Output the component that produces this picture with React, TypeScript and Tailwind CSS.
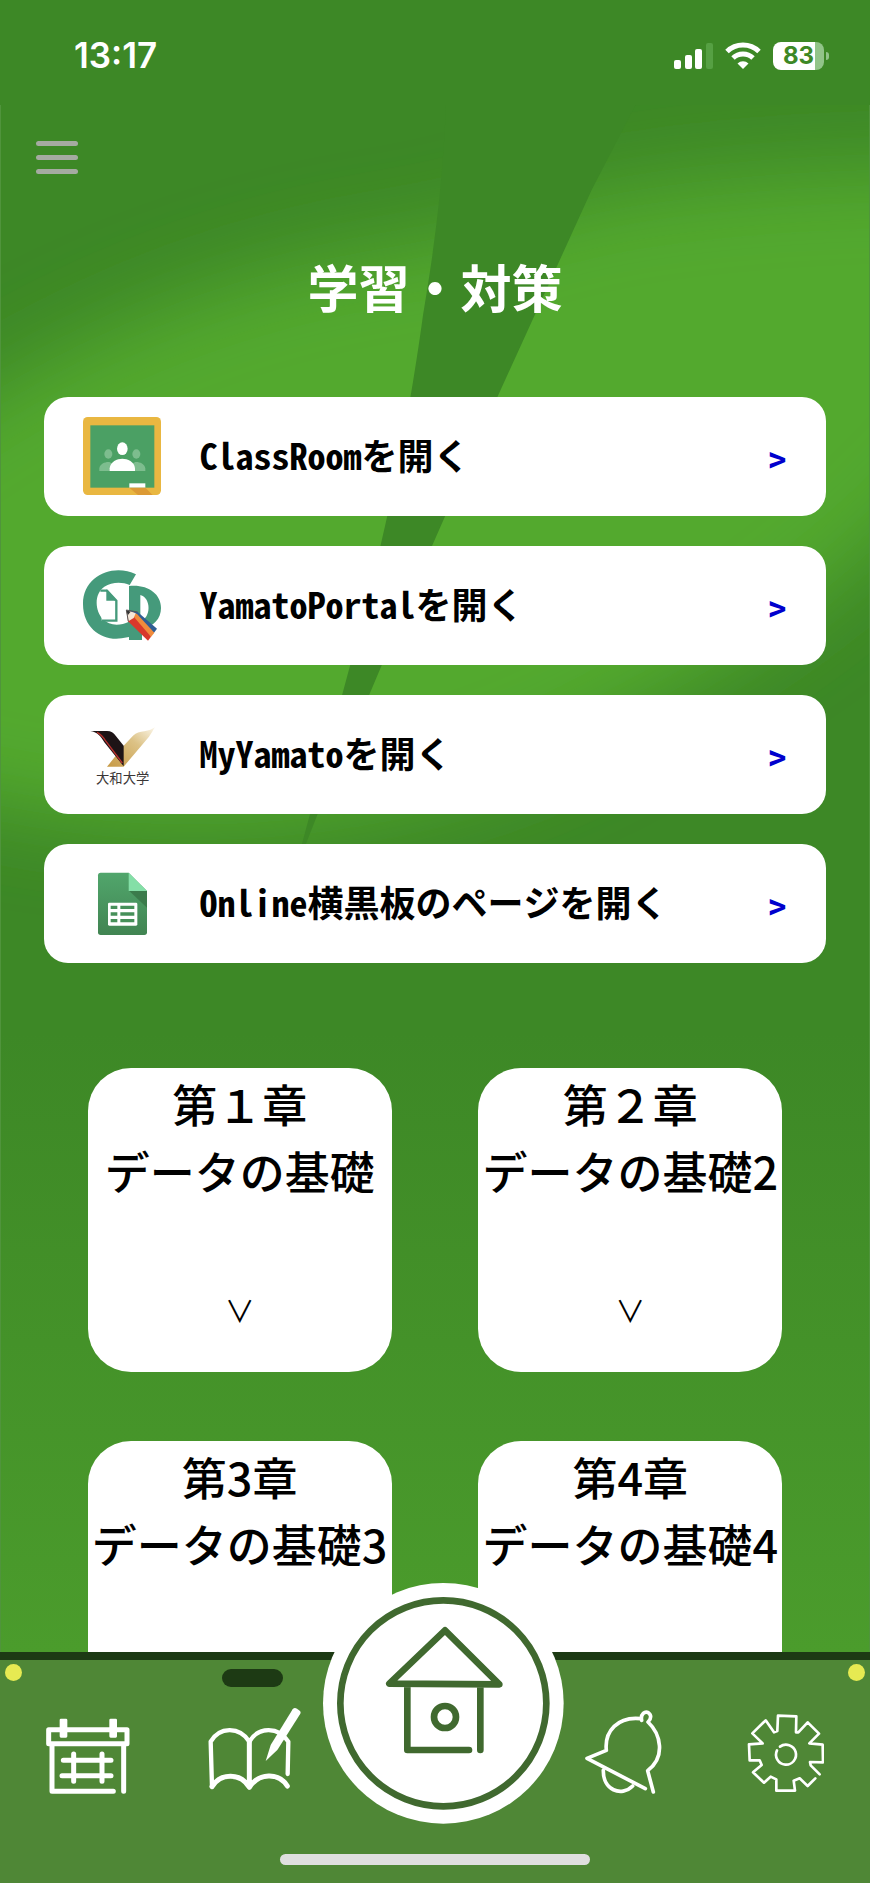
import React from 'react';

interface LinkItem {
  label: string;
  icon: React.ReactNode;
}

interface Chapter {
  number: string;
  title: string;
  expandable?: boolean;
}

const ClassroomIcon = () => (
  <svg viewBox="0 0 234 234" className="size-[78px]" aria-hidden="true">
    <rect width="234" height="234" rx="14" fill="#e9b741" />
    <rect x="22" y="25" width="192" height="187" fill="#4ba064" />
    <g fill="#7dbd8e">
      <ellipse cx="76" cy="111" rx="12" ry="14" />
      <ellipse cx="160" cy="111" rx="12" ry="14" />
      <path d="M49 162v-8c2-14 18-20 30-19l18 10-16 17zM187 162v-8c-2-14-18-20-30-19l-18 10 16 17z" />
    </g>
    <g fill="#fff">
      <ellipse cx="118" cy="95" rx="16" ry="19" />
      <path d="M80 162v-8c2-20 22-29 38-29s36 9 38 29v8z" />
      <rect x="139" y="199" width="48" height="13" />
    </g>
    <path d="M139 212h48l22 22h-44z" fill="#dc9a35" />
  </svg>
);

const PortalIcon = () => (
  <svg viewBox="0 0 234 234" className="size-[78px]" aria-hidden="true">
    <path
      d="M159 25C95-8 0 25 0 114c0 76 62 112 116 103l22-4v-46c-28 14-60 12-78-7-26-28-26-78 4-98 22-14 52-16 76-5z"
      fill="#459a7b"
    />
    <path
      fillRule="evenodd"
      d="M138 60c54-6 96 22 96 66 0 32-22 56-57 62v34h-39zM172 87v78c33-8 33-70 0-78z"
      fill="#459a7b"
    />
    <path d="M52 74h20l28 30v60H56" fill="#fff" stroke="#459a7b" strokeWidth="7" />
    <path d="M70 70l32 34H70z" fill="#459a7b" />
    <path d="M130 132l34 6 58 50-10 14-56-34z" fill="#2f5d94" />
    <path d="M130 132l32 12 52 56-10 13-60-54z" fill="#f08b3c" />
    <path d="M130 132l12 8 62 72-9 12-60-58z" fill="#d8392b" />
    <path d="M130 132l28 10-6 14-16 10z" fill="#f5e6d8" />
    <path d="M130 132l13 5-9 11z" fill="#333" />
    <path d="M130 132l34 6M130 132l6 34" stroke="#555" strokeWidth="3" />
  </svg>
);

const YamatoIcon = () => (
  <svg viewBox="0 0 234 234" className="size-[78px]" aria-hidden="true">
    <defs>
      <linearGradient id="gold" x1="0" y1="1" x2="1" y2="0">
        <stop offset="0" stopColor="#c79a45" />
        <stop offset="0.6" stopColor="#dcc286" />
        <stop offset="1" stopColor="#fbf6e8" />
      </linearGradient>
    </defs>
    <path d="M122 92l28-30c10-9 20-12 34-13 14-2 24-6 32-12-6 8-10 18-18 28l-76 90H72l18-22z" fill="url(#gold)" />
    <path d="M22 48h50c12 0 20 6 26 14l24 30v62L64 82C54 64 44 52 22 48z" fill="#1d1416" />
    <path d="M42 52c12 6 20 16 26 26l50 66" fill="none" stroke="#b8322e" strokeWidth="4" />
    <text x="119" y="204" textAnchor="middle" fontSize="40" fill="#3a3636" className="font-['Noto_Sans_CJK_JP',sans-serif] font-normal">
      大和大学
    </text>
  </svg>
);

const SheetsIcon = () => (
  <svg viewBox="0 0 234 234" className="size-[78px]" aria-hidden="true">
    <defs>
      <linearGradient id="sheet" x1="0" y1="0" x2="0" y2="1">
        <stop offset="0" stopColor="#51a66c" />
        <stop offset="1" stopColor="#418452" />
      </linearGradient>
    </defs>
    <path d="M53 26h84l55 55v124q0 8-8 8H53q-8 0-8-8V34q0-8 8-8z" fill="url(#sheet)" />
    <path d="M139 81h53v50z" fill="#3b7b4b" />
    <path d="M137 26l55 55h-55z" fill="#84dfa7" />
    <rect x="75" y="116" width="88" height="69" rx="4" fill="#fff" />
    <path d="M83 125h20v10H83zM112 125h42v10h-42zM83 145h20v10H83zM112 145h42v10h-42zM83 165h20v10H83zM112 165h42v10h-42z" fill="#469059" />
  </svg>
);

const CalendarIcon = () => (
  <svg viewBox="0 0 252 270" className="h-[90px] w-[84px]" fill="none" stroke="#fff" strokeWidth="15" strokeLinecap="round" strokeLinejoin="round">
    <path d="M8 71h235v42H8zM18 113v143h184M233 113v143" />
    <path d="M52 163h143M48 209h147M83 144v82M168 144v82" />
    <path d="M41 42q0-4 4-4h15q4 0 4 4v49q0 4-4 4H45q-4 0-4-4zM190 42q0-4 4-4h15q4 0 4 4v49q0 4-4 4h-15q-4 0-4-4z" fill="#fff" stroke="none" />
  </svg>
);

const BookIcon = () => (
  <svg viewBox="0 0 279 270" className="h-[90px] w-[93px]" fill="none" stroke="#fff" strokeWidth="15" strokeLinecap="round" strokeLinejoin="round">
    <path d="M12 242L8 107C34 62 94 60 124 107 152 60 212 62 241 107l-2 97" strokeWidth="13" />
    <path d="M124 107v136M12 242c26-42 86-42 112 2 28-44 88-46 114-4" strokeWidth="15" />
    <path d="M173 165l15-48L254 10q5-7 13-2l8 6q5 4 1 11l-68 107z" fill="#fff" stroke="none" />
  </svg>
);

const BellIcon = () => (
  <svg viewBox="0 0 231 270" className="h-[90px] w-[77px]" fill="none" stroke="#fff" strokeWidth="11" strokeLinecap="round" strokeLinejoin="round">
    <path d="M181 248L6 157l58-24C58 76 98 30 168 38l2 5c-4-20 10-28 20-23 9 6 10 18-1 28 38 36 54 104-1 146l17 64" />
    <path d="M55 192c-2 60 54 82 88 48" />
  </svg>
);

const GearIcon = () => (
  <svg viewBox="0 0 231 270" className="h-[90px] w-[77px]" fill="none" stroke="#fff" strokeWidth="8" strokeLinecap="round" strokeLinejoin="round">
    <path d="M205 217L182 240 158 217 140 224 144 254H88V220L71 212 51 230 18 199 44 177 38 163H8L6 115 47 112 16 82 56 43 81 79 91 75 93 29 148 31 147 79H154L182 49 216 83 187 112 227 116 228 169 189 168 191 178 218 205" />
    <path d="M99 122a30 30 0 1 1-9 11" />
  </svg>
);

const HomeIcon = () => (
  <svg viewBox="0 0 723 723" className="size-[241px]" fill="none" stroke="#40692f" strokeWidth="20" strokeLinecap="round" strokeLinejoin="round">
    <circle cx="361" cy="361" r="361" fill="#fff" stroke="none" />
    <circle cx="361" cy="361" r="309" />
    <path d="M366 142L199 302l330 2zM253 306v195h185M472 306v195" />
    <circle cx="366" cy="402" r="33" />
  </svg>
);

const StatusIcons = () => (
  <div className="flex items-center gap-3">
    <svg viewBox="0 0 39 27" className="h-[27px] w-[39px]" fill="#fff" aria-hidden="true">
      <rect x="0" y="18" width="7" height="9" rx="2" />
      <rect x="11" y="13" width="7" height="14" rx="2" />
      <rect x="21" y="7" width="7" height="20" rx="2" />
      <rect x="32" y="1" width="7" height="26" rx="2" fill="#56a043" />
    </svg>
    <svg viewBox="0 0 36 27" className="h-[27px] w-[36px]" fill="none" stroke="#fff" strokeWidth="5" aria-hidden="true">
      <path d="M2 9.500a23 23 0 0 1 32 0" />
      <path d="M8 16a14.500 14.500 0 0 1 20 0" />
      <path d="M18 27l-5.500-5.500a8 8 0 0 1 11 0z" fill="#fff" stroke="none" />
    </svg>
    <div className="flex items-center gap-[2px]">
      <div className="flex h-7 w-[51px] items-center justify-center rounded-lg bg-linear-to-r from-white from-83% to-[#92c489] to-83%">
        <span className="font-[Inter,sans-serif] text-2xl font-bold text-[#3d8826]">83</span>
      </div>
      <div className="h-2 w-[3px] rounded-r-full bg-[#92c489]" />
    </div>
  </div>
);

const LeafBackground = () => (
  <svg viewBox="0 105 870 1547" preserveAspectRatio="none" className="absolute inset-0 h-full w-full" aria-hidden="true">
    <defs>
      <linearGradient id="base" x1="0" y1="105" x2="0" y2="1652" gradientUnits="userSpaceOnUse">
        <stop offset="0.6" stopColor="#3d8826" />
        <stop offset="1" stopColor="#4b9c2c" />
      </linearGradient>
      <filter id="soft" x="-20%" y="-20%" width="140%" height="140%">
        <feGaussianBlur stdDeviation="42" />
      </filter>
    </defs>
    <rect y="105" width="870" height="1547" fill="url(#base)" />
    <path
      d="M-160 500C20 350 220 265 440 240L580 200C700 175 860 165 1020 170L980 440C880 560 760 650 620 720C440 830 120 870-160 760z"
      fill="#52a92f"
      filter="url(#soft)"
    />
    <path
      d="M446 105C442 200 432 260 423 315C410 410 390 520 350 665L300 850L306 843L317 815L369 695L432 546L498 396L535 315L592 190L636 105z"
      fill="#3d8826"
    />
  </svg>
);

const links: LinkItem[] = [
  { label: 'ClassRoomを開く', icon: <ClassroomIcon /> },
  { label: 'YamatoPortalを開く', icon: <PortalIcon /> },
  { label: 'MyYamatoを開く', icon: <YamatoIcon /> },
  { label: 'Online横黒板のページを開く', icon: <SheetsIcon /> },
];

const chapters: Chapter[] = [
  { number: '第１章', title: 'データの基礎', expandable: true },
  { number: '第２章', title: 'データの基礎2', expandable: true },
  { number: '第3章', title: 'データの基礎3' },
  { number: '第4章', title: 'データの基礎4' },
];

const LinkRow = ({ label, icon }: LinkItem) => (
  <a
    href="#"
    className="flex h-[119px] items-center rounded-3xl bg-white pr-[39px] pb-[2px] pl-[39px] font-['Noto_Sans_Mono_CJK_JP','DejaVu_Sans_Mono','Noto_Sans_CJK_JP',monospace] text-4xl font-bold text-black"
  >
    {icon}
    <span className="ml-[38px] flex-1 pb-1 whitespace-nowrap">{label}</span>
    <span className="pt-1 text-[#0000cd]">&gt;</span>
  </a>
);

const ChapterCard = ({ number, title, expandable }: Chapter) => (
  <button
    type="button"
    className="flex aspect-square w-[35%] flex-col items-center rounded-[43px] bg-white pt-[2px] text-[45px] leading-[67px] font-medium whitespace-nowrap text-black"
  >
    <span>{number}</span>
    <span>{title}</span>
    {expandable && <span className="mt-[72px] text-3xl leading-[67px] font-normal">∨</span>}
  </button>
);

const App = () => {
  return (
    <div className="flex h-screen flex-col overflow-hidden bg-[#3d8826] font-['Noto_Sans_CJK_JP',sans-serif]">
      <header className="flex h-[105px] shrink-0 items-center justify-between pt-[6px] pr-[41px] pl-[74px]">
        <span className="font-[Inter,sans-serif] text-[35px] font-semibold text-white">13:17</span>
        <StatusIcons />
      </header>

      <main className="relative min-h-0 flex-1 overflow-hidden border-x border-white/10">
        <LeafBackground />
        <div className="relative">
          <button type="button" aria-label="メニュー" className="mt-9 ml-[35px] flex w-[42px] flex-col gap-[9px]">
            <span className="h-[5px] w-full rounded-full bg-[#a5aba1]" />
            <span className="h-[5px] w-full rounded-full bg-[#a5aba1]" />
            <span className="h-[5px] w-full rounded-full bg-[#a5aba1]" />
          </button>

          <h1 className="mt-[74px] text-center text-[51px] leading-[76px] font-bold text-white">学習・対策</h1>

          <div className="mx-auto mt-[73px] flex w-[90%] flex-col gap-[30px]">
            {links.map((link) => (
              <LinkRow key={link.label} {...link} />
            ))}
          </div>

          <div className="mt-[105px] flex flex-wrap justify-evenly gap-y-[69px]">
            {chapters.map((chapter) => (
              <ChapterCard key={chapter.title} {...chapter} />
            ))}
          </div>
        </div>
      </main>

      <footer className="relative shrink-0 border-t-8 border-[#1d3a14] bg-[#4f8736]">
        <span className="absolute top-1 left-[5px] size-[17px] rounded-full bg-[#e6ea52]" />
        <span className="absolute top-1 right-[5px] size-[17px] rounded-full bg-[#e6ea52]" />
        <nav className="flex items-start justify-between px-[46px]">
          <div className="mt-[46px] flex gap-[78px]">
            <button type="button" aria-label="カレンダー">
              <CalendarIcon />
            </button>
            <button type="button" aria-label="学習" aria-current="page" className="relative">
              <span className="absolute -top-[37px] left-[14px] h-[18px] w-[61px] rounded-full bg-[#1d3a14]" />
              <BookIcon />
            </button>
          </div>
          <button type="button" aria-label="ホーム" className="-mt-[77px] rounded-full">
            <HomeIcon />
          </button>
          <div className="mt-[46px] flex gap-[85px]">
            <button type="button" aria-label="お知らせ">
              <BellIcon />
            </button>
            <button type="button" aria-label="設定">
              <GearIcon />
            </button>
          </div>
        </nav>
        <div className="mx-auto mt-[30px] mb-[18px] h-[11px] w-[310px] rounded-full bg-[#dfdfdf]" />
      </footer>
    </div>
  );
};

export default App;
